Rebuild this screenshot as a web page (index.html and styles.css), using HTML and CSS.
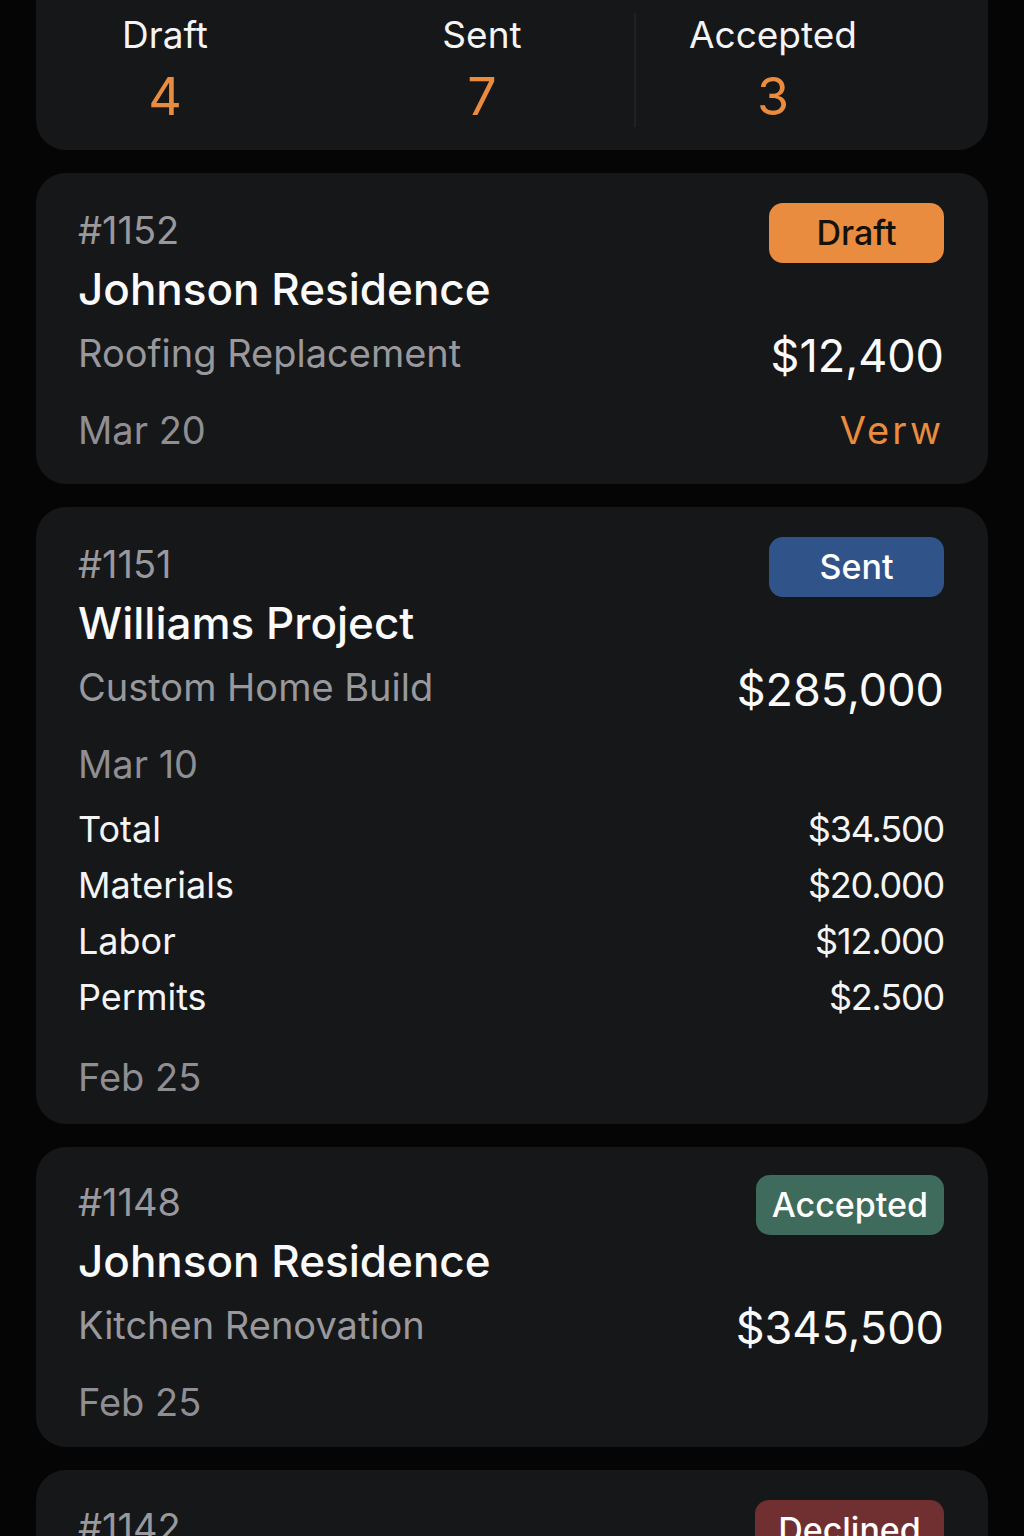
FILE: index.html
```html
<!DOCTYPE html>
<html lang="en">
<head>
    <meta charset="UTF-8">
    <meta name="viewport" content="width=device-width, initial-scale=1.0">
    <title>Estimates</title>
    <link rel="stylesheet" href="styles.css">
</head>
<body>
    <div class="list">
        <div class="stats">
            <div class="stat">
                <div class="stat-label">Draft</div>
                <div class="stat-value">4</div>
            </div>
            <div class="stat stat-sent">
                <div class="stat-label">Sent</div>
                <div class="stat-value">7</div>
            </div>
            <div class="stat stat-last">
                <div class="stat-label">Accepted</div>
                <div class="stat-value">3</div>
            </div>
        </div>

        <div class="card">
            <div class="row-top">
                <span class="num">#1152</span>
                <span class="badge badge-draft">Draft</span>
            </div>
            <div class="title">Johnson Residence</div>
            <div class="row-mid">
                <span class="sub">Roofing Replacement</span>
                <span class="amount">$12,400</span>
            </div>
            <div class="row-date">
                <span class="date">Mar 20</span>
                <span class="view">Verw</span>
            </div>
        </div>

        <div class="card card-long">
            <div class="row-top">
                <span class="num">#1151</span>
                <span class="badge badge-sent">Sent</span>
            </div>
            <div class="title">Williams Project</div>
            <div class="row-mid">
                <span class="sub">Custom Home Build</span>
                <span class="amount">$285,000</span>
            </div>
            <div class="row-date">
                <span class="date">Mar 10</span>
            </div>
            <div class="breakdown">
                <div class="line"><span>Total</span><span class="line-value">$34.500</span></div>
                <div class="line"><span>Materials</span><span class="line-value">$20.000</span></div>
                <div class="line"><span>Labor</span><span class="line-value">$12.000</span></div>
                <div class="line"><span>Permits</span><span class="line-value">$2.500</span></div>
            </div>
            <div class="row-date row-date-end">
                <span class="date">Feb 25</span>
            </div>
        </div>

        <div class="card card-short">
            <div class="row-top">
                <span class="num">#1148</span>
                <span class="badge badge-accepted">Accepted</span>
            </div>
            <div class="title">Johnson Residence</div>
            <div class="row-mid">
                <span class="sub">Kitchen Renovation</span>
                <span class="amount">$345,500</span>
            </div>
            <div class="row-date">
                <span class="date">Feb 25</span>
            </div>
        </div>

        <div class="card">
            <div class="row-top">
                <span class="num">#1142</span>
                <span class="badge badge-declined">Declined</span>
            </div>
            <div class="title">Smith Residence</div>
            <div class="row-mid">
                <span class="sub">Deck Addition</span>
                <span class="amount">$18,900</span>
            </div>
        </div>
    </div>
</body>
</html>
```

FILE: styles.css
```css
body {
    margin: 0;
    background: #050505;
    font-family: Inter, "Noto Sans", sans-serif;
    color: #f4f4f5;
    overflow: hidden;
}
.list {
    margin: 0 36px;
    display: flex;
    flex-direction: column;
    gap: 23px;
}
.stats {
    margin-top: -30px;
    padding: 43px 0 23px;
    background: #161719;
    border-radius: 30px;
    display: grid;
    grid-template-columns: 258px 340px 276px;
}
.stat {
    text-align: center;
}
.stat-sent {
    padding-left: 36px;
}
.stat-last {
    border-left: 2px solid #202124;
}
.stat-label {
    font-size: 37px;
    line-height: 44px;
}
.stat-value {
    margin-top: 10px;
    font-size: 52px;
    line-height: 60px;
    color: #e98c3f;
}
.card {
    background: #161719;
    border-radius: 30px;
    padding: 30px 44px 31px 42px;
}
.card-long {
    padding-bottom: 24px;
}
.card-short {
    padding-top: 28px;
    padding-bottom: 22px;
}
.row-top {
    display: flex;
    justify-content: space-between;
    align-items: center;
    height: 60px;
}
.num {
    font-size: 38px;
    color: #98989d;
    margin-bottom: 6px;
}
.badge {
    min-width: 175px;
    box-sizing: border-box;
    height: 60px;
    padding: 0 16px;
    border-radius: 14px;
    font-size: 34px;
    font-weight: 500;
    line-height: 60px;
    text-align: center;
    color: #fff;
}
.badge-draft {
    background: #e98c3f;
    color: #15100a;
}
.badge-sent {
    background: #30548a;
}
.badge-accepted {
    background: #3e6b5b;
}
.badge-declined {
    min-width: 189px;
    background: #702f31;
}
.title {
    font-size: 44px;
    font-weight: 500;
    line-height: 52px;
    color: #fafafa;
}
.row-mid {
    margin-top: 15px;
    display: flex;
    justify-content: space-between;
    align-items: flex-start;
}
.sub {
    font-size: 38px;
    line-height: 46px;
    color: #98989d;
}
.amount {
    font-size: 45px;
    line-height: 52px;
    color: #fafafa;
}
.row-date {
    margin-top: 25px;
    display: flex;
    justify-content: space-between;
}
.date {
    font-size: 38px;
    line-height: 46px;
    color: #8e8e93;
}
.view {
    font-size: 38px;
    line-height: 46px;
    color: #e98c3f;
    letter-spacing: 3px;
}
.breakdown {
    margin-top: 14px;
}
.line {
    display: flex;
    justify-content: space-between;
    font-size: 36px;
    line-height: 56px;
    color: #f4f4f5;
}
.line-value {
    letter-spacing: -1.2px;
}
.row-date-end {
    margin-top: 29px;
}
```
